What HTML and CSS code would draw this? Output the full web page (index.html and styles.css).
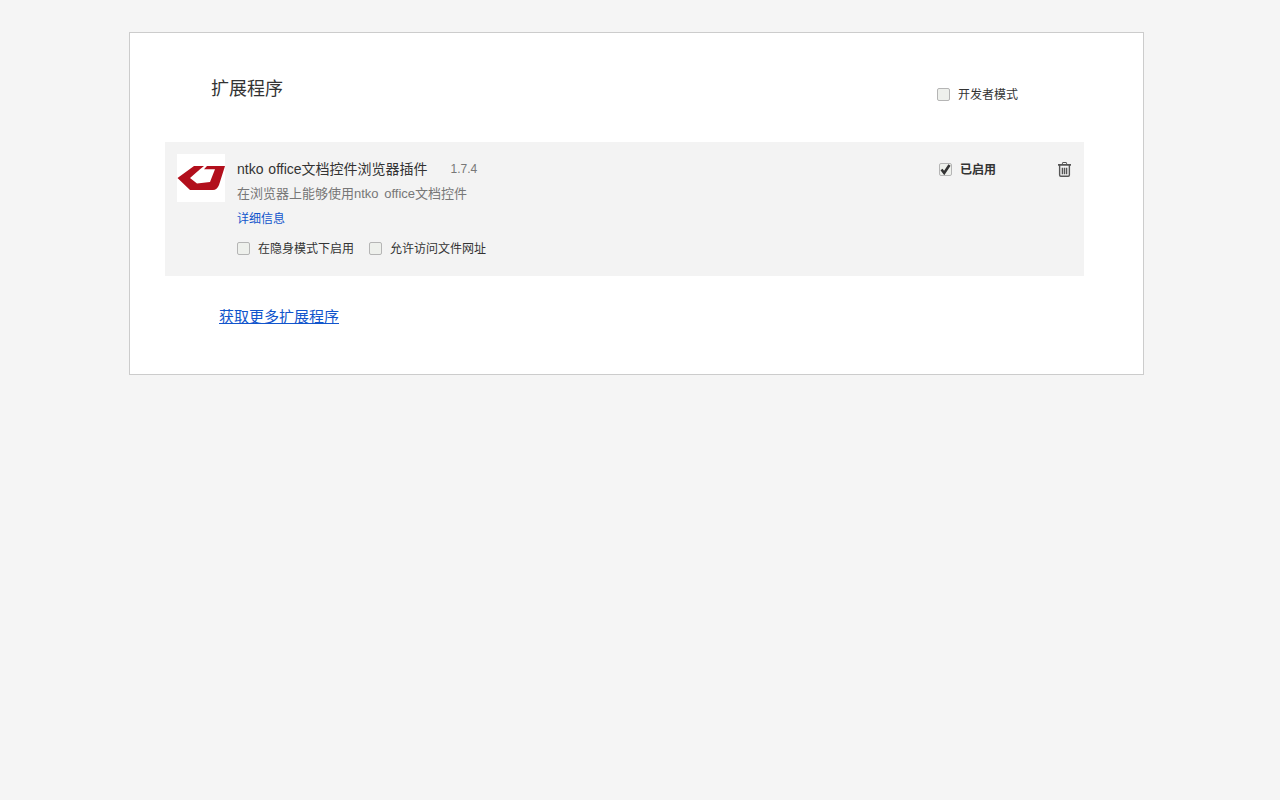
FILE: index.html
```html
<!DOCTYPE html>
<html lang="zh-CN">
<head>
    <meta charset="UTF-8">
    <meta name="viewport" content="width=device-width, initial-scale=1.0">
    <title>扩展程序</title>
    <link rel="stylesheet" href="styles.css">
</head>
<body>
    <div class="card">
        <!-- Header -->
        <div class="page-header">
            <h1>扩展程序</h1>
            <label class="check dev-mode"><span class="box"></span>开发者模式</label>
        </div>

        <!-- Extension row -->
        <div class="ext-row">
            <div class="ext-logo">
                <svg width="48" height="48" viewBox="0 0 48 48">
                    <path fill="#b20f1c" d="M0.500 24 L17 12 L27 12 L23 15.300 L13 24 L20 29.500 L33 28 L38 15.300 L27 15.300 L30 12 L48 12 L42 31 Q40 36 36 36 L13 36 Z"/>
                </svg>
            </div>
            <div class="ext-info">
                <div class="ext-title">
                    <span class="ext-name">ntko office文档控件浏览器插件</span>
                    <span class="ext-version">1.7.4</span>
                </div>
                <div class="ext-desc">在浏览器上能够使用ntko office文档控件</div>
                <a class="ext-details" href="#">详细信息</a>
                <div class="ext-options">
                    <label class="check"><span class="box"></span>在隐身模式下启用</label>
                    <label class="check"><span class="box"></span>允许访问文件网址</label>
                </div>
            </div>
            <div class="ext-controls">
                <label class="check enabled">
                    <span class="box checked">
                        <svg width="11" height="11" viewBox="0 0 11 11"><path fill="none" stroke="#333" stroke-width="2.600" d="M1.500 5.500 L4.200 9 L9.500 1"/></svg>
                    </span>已启用</label>
                <svg class="trash" width="13" height="15" viewBox="0 0 14 16">
                    <path fill="#555" d="M5 0 H9 L10 2 H14 V4 H13 V14 Q13 16 11 16 H3 Q1 16 1 14 V4 H0 V2 H4 Z M5.500 1 L5 2 H9 L8.500 1 Z M2.500 4 V14 Q2.500 14.500 3 14.500 H11 Q11.500 14.500 11.500 14 V4 Z M4 6 H5.500 V13 H4 Z M6.250 6 H7.750 V13 H6.250 Z M8.500 6 H10 V13 H8.500 Z"/>
                </svg>
            </div>
        </div>

        <a class="more-link" href="#">获取更多扩展程序</a>
    </div>
</body>
</html>
```

FILE: styles.css
```css
body {
    margin: 0;
    background-color: #f5f5f5;
    color: #333;
    font-family: "Liberation Sans", "Noto Sans CJK SC", sans-serif;
    font-size: 12px;
}
.card {
    box-sizing: border-box;
    width: 1015px;
    height: 343px;
    margin: 32px 0 0 129px;
    padding: 0 59px 0 35px;
    background-color: #fff;
    border: 1px solid #ccc;
}
.page-header {
    display: flex;
    justify-content: space-between;
    height: 109px;
}
h1 {
    margin: 43px 0 0 46px;
    font-size: 18px;
    font-weight: normal;
    line-height: 26px;
}
.check {
    display: flex;
    align-items: center;
    height: 16px;
    line-height: 16px;
}
.box {
    box-sizing: border-box;
    width: 13px;
    height: 13px;
    margin: -1px 8px 0 0;
    background-color: #eef0ec;
    border: 1px solid #b5b5b5;
    border-radius: 2px;
}
.dev-mode {
    margin: 54px 66px 0 0;
}
.ext-row {
    display: flex;
    box-sizing: border-box;
    height: 134px;
    padding: 12px;
    background-color: #f3f3f3;
}
.ext-logo {
    width: 48px;
    height: 48px;
    background-color: #fff;
}
.ext-info {
    flex: 1;
    margin-left: 12px;
    padding-top: 3px;
}
.ext-title {
    display: flex;
    height: 25px;
    font-size: 14px;
    line-height: 24px;
    word-spacing: 1px;
}
.ext-version {
    margin-left: 23px;
    color: #777;
    font-size: 12px;
}
.ext-desc {
    height: 25px;
    color: #777;
    font-size: 13px;
    line-height: 24px;
    word-spacing: 2px;
}
.ext-details {
    display: block;
    height: 24px;
    color: #15c;
    line-height: 24px;
    text-decoration: none;
}
.ext-options {
    display: flex;
    gap: 15px;
    margin-top: 10px;
}
.ext-controls {
    display: flex;
    width: 133px;
    align-items: flex-start;
    justify-content: space-between;
    padding: 8px 1px 0 0;
    box-sizing: border-box;
}
.enabled {
    font-weight: bold;
}
.box.checked {
    display: flex;
    align-items: center;
    justify-content: center;
}
.more-link {
    display: inline-block;
    margin: 29px 0 0 54px;
    color: #15c;
    font-size: 15px;
    line-height: 24px;
}
```
